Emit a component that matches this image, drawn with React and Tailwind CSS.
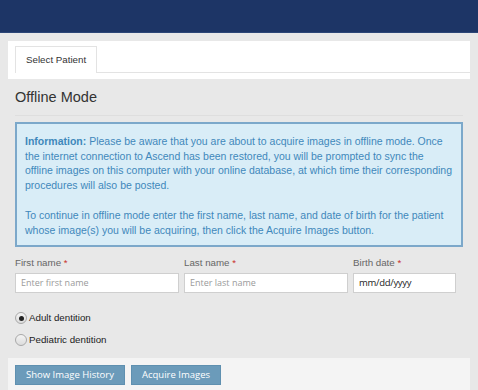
import React from 'react'

function Radio({ checked, label }) {
  return (
    <label className="flex items-center h-[22px] gap-[2px] text-[9.75px] text-[#222]">
      <span className="w-[12px] h-[12px] rounded-full border border-[#a9a9a9] bg-gradient-to-b from-[#f4f4f4] to-[#dcdcdc] flex items-center justify-center">
        {checked && <span className="w-[5px] h-[5px] rounded-full bg-[#222]"></span>}
      </span>
      {label}
    </label>
  )
}

function Field({ label, children }) {
  return (
    <div className="flex flex-col">
      <div className="text-[9.75px] leading-[15px] text-[#666] mb-[3px]">
        {label} <span className="text-[#c9302c]">*</span>
      </div>
      {children}
    </div>
  )
}

export default function App() {
  return (
    <div className="w-[478px] h-[390px] overflow-hidden bg-[#e8e8e8] font-['Liberation_Sans',Arial,sans-serif]">
      {/* top bar */}
      <div className="h-[33px] bg-[#1d3566] border-b border-[#2c4677]"></div>

      <div className="px-2 pt-2">
        {/* tabs */}
        <div className="bg-white h-[38px] pt-[5px] pl-[7px]">
          <div className="flex border-b border-[#e3e3e3]">
            <div className="h-[27px] px-[10px] flex items-center border border-b-0 border-[#e3e3e3] bg-white text-[9.75px] text-[#333] -mb-px">
              Select Patient
            </div>
          </div>
        </div>

        <div className="px-[7px]">
          <div className="pt-[8px] pb-[8px] border-b border-[#dedede]">
            <h3 className="text-[14.5px] leading-[20px] text-[#333]">Offline Mode</h3>
          </div>

          <div className="mt-[6px] border-2 border-[#7ca8ca] bg-[#d9edf7] text-[#3f88bb] text-[10.5px] leading-[14.5px] pl-[8px] pr-[3px] pt-[10px] pb-[8px]">
            <p>
              <b>Information:</b> Please be aware that you are about to acquire images in offline mode. Once<br />
              the internet connection to Ascend has been restored, you will be prompted to sync the<br />
              offline images on this computer with your online database, at which time their corresponding<br />
              procedures will also be posted.
            </p>
            <p className="mt-[16px]">
              To continue in offline mode enter the first name, last name, and date of birth for the patient whose image(s) you will be acquiring, then click the Acquire Images button.
            </p>
          </div>

          <div className="mt-[8px] grid grid-cols-[164px_164px_103px] gap-x-[5px]">
            <Field label="First name">
              <div className="h-[20px] border border-[#cfcfcf] bg-white px-[5px] flex items-center text-[9px] text-[#9a9a9a] font-['Open_Sans',sans-serif]">
                Enter first name
              </div>
            </Field>
            <Field label="Last name">
              <div className="h-[20px] border border-[#cfcfcf] bg-white px-[5px] flex items-center text-[9px] text-[#9a9a9a] font-['Open_Sans',sans-serif]">
                Enter last name
              </div>
            </Field>
            <Field label="Birth date">
              <div className="h-[20px] border border-[#cfcfcf] bg-white px-[5px] flex items-center text-[9.5px] text-[#222] font-['Open_Sans',sans-serif] tracking-[-0.3px]">
                mm/dd/yyyy
              </div>
            </Field>
          </div>

          <div className="mt-[14px] pb-[7px]">
            <Radio checked label="Adult dentition" />
            <Radio label="Pediatric dentition" />
          </div>
        </div>

        {/* footer */}
        <div className="bg-[#f4f4f4] h-[40px] pt-[7px] pl-[7px] flex items-start gap-[6px]">
          <button className="h-[20px] w-[110px] bg-[#6b9bba] border border-[#5f90b0] text-white text-[9.5px] font-['Open_Sans',sans-serif]">
            Show Image History
          </button>
          <button className="h-[20px] w-[90px] bg-[#6b9bba] border border-[#5f90b0] text-white text-[9.5px] font-['Open_Sans',sans-serif]">
            Acquire Images
          </button>
        </div>
      </div>
    </div>
  )
}
